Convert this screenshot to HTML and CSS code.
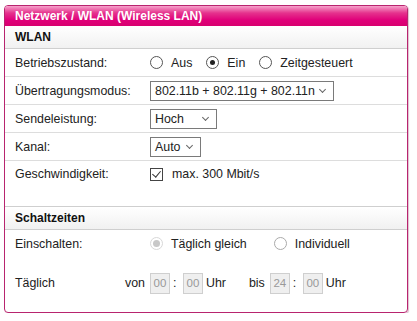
FILE: index.html
```html
<!DOCTYPE html>
<html lang="de">
<head>
    <meta charset="UTF-8">
    <title>Netzwerk / WLAN</title>
    <link rel="stylesheet" href="styles.css">
</head>
<body>
  <div class="panel">
    <div class="panel-title">Netzwerk / WLAN (Wireless LAN)</div>

    <div class="section-head">WLAN</div>

    <div class="row">
      <span class="label">Betriebszustand:</span>
      <span class="opt"><span class="radio"></span>Aus</span>
      <span class="opt"><span class="radio on"></span>Ein</span>
      <span class="opt"><span class="radio"></span>Zeitgesteuert</span>
    </div>
    <div class="row">
      <span class="label">Übertragungsmodus:</span>
      <span class="select sel-mode">802.11b + 802.11g + 802.11n<i class="chev"></i></span>
    </div>
    <div class="row">
      <span class="label">Sendeleistung:</span>
      <span class="select sel-power">Hoch<i class="chev"></i></span>
    </div>
    <div class="row">
      <span class="label">Kanal:</span>
      <span class="select sel-chan">Auto<i class="chev"></i></span>
    </div>
    <div class="row last">
      <span class="label">Geschwindigkeit:</span>
      <span class="opt"><span class="check"></span>max. 300 Mbit/s</span>
    </div>

    <div class="section-head">Schaltzeiten</div>

    <div class="row plain">
      <span class="label">Einschalten:</span>
      <span class="opt wide"><span class="radio dis"></span>Täglich gleich</span>
      <span class="opt"><span class="radio light"></span>Individuell</span>
    </div>
    <div class="row plain time">
      <span class="label short">Täglich</span>
      <span class="word">von</span>
      <span class="num">00</span><span class="colon">:</span><span class="num">00</span>
      <span class="word uhr">Uhr</span>
      <span class="word">bis</span>
      <span class="num">24</span><span class="colon">:</span><span class="num">00</span>
      <span class="word">Uhr</span>
    </div>
  </div>
</body>
</html>
```

FILE: styles.css
```css
/* page */
body {
    margin: 0;
    padding: 5px 9px 0 4px;
    background: #fff;
    font-family: "Liberation Sans", Arial, sans-serif;
    font-size: 12.4px;
    color: #222;
}

/* outer box */
.panel {
    width: 402px;
    height: 306px;
    border: 1px solid #b8246f;
    border-radius: 4px;
    overflow: hidden;
    box-shadow: 1px 1px 1px rgba(120, 0, 60, 0.25);
}

.panel-title {
    height: 20px;
    line-height: 20px;
    padding-left: 10px;
    color: #fff;
    font-size: 12px;
    font-weight: bold;
    background: linear-gradient(#f6a2cb, #e5328d 35%, #e0007a 70%, #d8006f);
}

.section-head {
    height: 22px;
    line-height: 22px;
    padding-left: 10px;
    font-size: 12px;
    font-weight: bold;
    color: #111;
    background: linear-gradient(#fff, #f1f1f1);
    border-bottom: 1px solid #cfcfcf;
}

.row + .section-head {
    border-top: 1px solid #cfcfcf;
}

/* form rows */
.row {
    display: flex;
    align-items: center;
    height: 27px;
    padding-left: 10px;
    border-bottom: 1px solid #ddd;
}

.row.last {
    height: 45px;
    align-items: flex-start;
    padding-top: 6px;
    box-sizing: border-box;
    border-bottom: none;
}

.row.plain {
    border-bottom: none;
}

.row.time {
    height: 40px;
    padding-top: 6px;
}

.label {
    width: 135px;
    flex: none;
}

.label.short {
    width: 110px;
}

/* radios and checkbox */
.opt {
    display: flex;
    align-items: center;
    margin-right: 14px;
}

.opt.wide {
    margin-right: 27px;
}

.radio {
    width: 11px;
    height: 11px;
    border: 1px solid #555;
    border-radius: 50%;
    margin-right: 8px;
    position: relative;
    background: #fff;
}

.radio.on::after {
    content: "";
    position: absolute;
    left: 3px;
    top: 3px;
    width: 5px;
    height: 5px;
    border-radius: 50%;
    background: #222;
}

.radio.light {
    border-color: #aaa;
}

.radio.dis {
    border-color: #d8d8d8;
}

.radio.dis::after {
    content: "";
    position: absolute;
    left: 2px;
    top: 2px;
    width: 7px;
    height: 7px;
    border-radius: 50%;
    background: #c8c8c8;
}

.check {
    width: 11px;
    height: 11px;
    border: 1px solid #444;
    margin-right: 9px;
    position: relative;
}

.check::after {
    content: "";
    position: absolute;
    left: 3px;
    top: 0;
    width: 4px;
    height: 7px;
    border: solid #333;
    border-width: 0 1px 1px 0;
    transform: rotate(40deg);
}

/* dropdowns */
.select {
    display: flex;
    align-items: center;
    height: 18px;
    border: 1px solid #7a7a7a;
    padding-left: 4px;
    position: relative;
    white-space: nowrap;
}

.sel-mode { width: 178px; }
.sel-power { width: 61px; }
.sel-chan { width: 45px; }

.chev {
    position: absolute;
    right: 8px;
    top: 5px;
    width: 4px;
    height: 4px;
    border: solid #666;
    border-width: 0 1px 1px 0;
    transform: rotate(45deg);
}

/* time inputs */
.word {
    margin-right: 5px;
}

.word.uhr {
    margin-right: 23px;
}

.num {
    width: 18px;
    height: 19px;
    line-height: 19px;
    text-align: center;
    background: #efefef;
    border: 1px solid #cfcfcf;
    color: #999;
    font-size: 11.5px;
    margin-right: 3px;
}

.colon {
    width: 9px;
    margin-right: 1px;
}
```
